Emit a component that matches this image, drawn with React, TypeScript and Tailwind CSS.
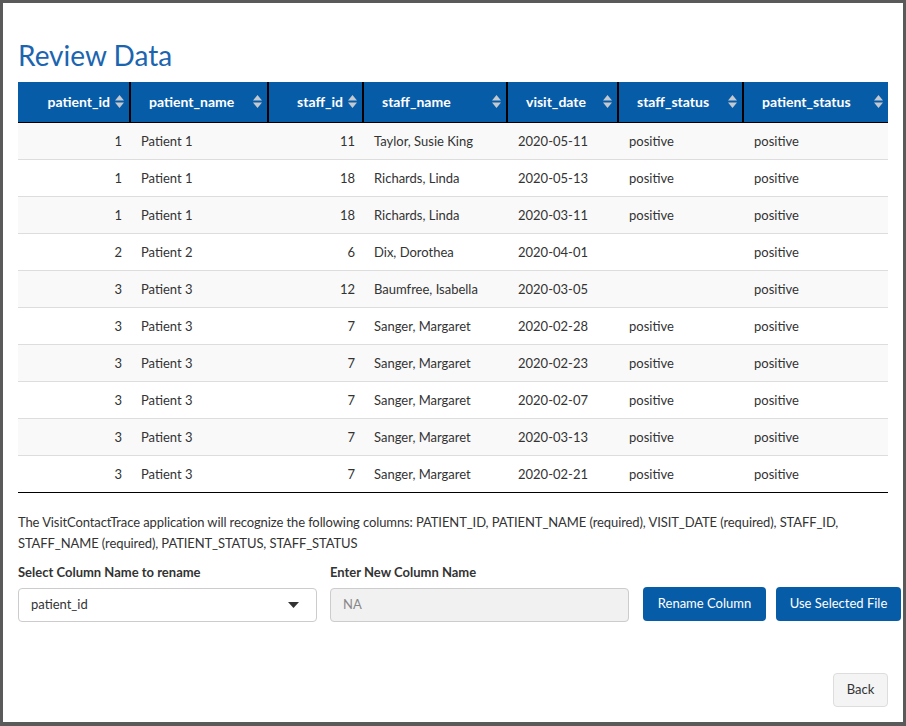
import React from 'react';

const columns = [
    { key: 'patient_id', width: 113, numeric: true },
    { key: 'patient_name', width: 138 },
    { key: 'staff_id', width: 95, numeric: true },
    { key: 'staff_name', width: 144 },
    { key: 'visit_date', width: 111 },
    { key: 'staff_status', width: 125 },
    { key: 'patient_status', width: 144 },
];

const rows = [
    ['1', 'Patient 1', '11', 'Taylor, Susie King', '2020-05-11', 'positive', 'positive'],
    ['1', 'Patient 1', '18', 'Richards, Linda', '2020-05-13', 'positive', 'positive'],
    ['1', 'Patient 1', '18', 'Richards, Linda', '2020-03-11', 'positive', 'positive'],
    ['2', 'Patient 2', '6', 'Dix, Dorothea', '2020-04-01', '', 'positive'],
    ['3', 'Patient 3', '12', 'Baumfree, Isabella', '2020-03-05', '', 'positive'],
    ['3', 'Patient 3', '7', 'Sanger, Margaret', '2020-02-28', 'positive', 'positive'],
    ['3', 'Patient 3', '7', 'Sanger, Margaret', '2020-02-23', 'positive', 'positive'],
    ['3', 'Patient 3', '7', 'Sanger, Margaret', '2020-02-07', 'positive', 'positive'],
    ['3', 'Patient 3', '7', 'Sanger, Margaret', '2020-03-13', 'positive', 'positive'],
    ['3', 'Patient 3', '7', 'Sanger, Margaret', '2020-02-21', 'positive', 'positive'],
];

const gridCols = 'grid grid-cols-[113px_138px_95px_144px_111px_125px_144px]';

const SortIcon = () => (
    <svg width="9" height="13" viewBox="0 0 9 13" className="shrink-0">
        <path d="M4.5 0 L9 5.5 L0 5.5 Z" fill="#c4c9d0" />
        <path d="M0 7.5 L9 7.5 L4.5 13 Z" fill="#c4c9d0" />
    </svg>
);

const App: React.FC = () => {
    return (
        <div
            className="w-[906px] h-[726px] bg-[#5a5a5a] pt-[3px] pl-[3px] overflow-hidden"
            style={{ fontFamily: 'Lato, "Open Sans", sans-serif' }}
        >
            <div className="w-[900px] h-[719px] bg-white px-[15px] flex flex-col text-[#333]">
                <h1 className="mt-[35px] text-[28px] leading-[34px] text-[#1b65b0] font-normal">Review Data</h1>

                {/* data table */}
                <div className="mt-[10px] w-[870px]">
                    <div className={`${gridCols} h-[41px] bg-[#075ca8] border-b border-black`}>
                        {columns.map((c, i) => (
                            <div
                                key={c.key}
                                className={`flex items-center pl-[18px] pr-[5px] pb-px text-white font-bold text-[14px] ${i < columns.length - 1 ? 'border-r-2 border-black' : ''} ${c.numeric ? 'justify-end gap-[5px]' : 'justify-between'}`}
                            >
                                <span>{c.key}</span>
                                <SortIcon />
                            </div>
                        ))}
                    </div>
                    {rows.map((r, ri) => (
                        <div
                            key={ri}
                            className={`${gridCols} h-[37px] text-[13px] ${ri % 2 === 0 ? 'bg-[#f9f9f9]' : 'bg-white'} ${ri === rows.length - 1 ? 'border-b border-black' : 'border-b border-[#dddddd]'}`}
                        >
                            {r.map((v, ci) => (
                                <div
                                    key={ci}
                                    className={`flex items-center pt-px px-[10px] ${columns[ci].numeric ? 'justify-end pr-[9px]' : ''}`}
                                >
                                    {v}
                                </div>
                            ))}
                        </div>
                    ))}
                </div>

                <p className="mt-[19px] text-[13px] leading-[21px] tracking-[-0.1px]">
                    The VisitContactTrace application will recognize the following columns: PATIENT_ID, PATIENT_NAME (required), VISIT_DATE (required), STAFF_ID,
                    <br />
                    STAFF_NAME (required), PATIENT_STATUS, STAFF_STATUS
                </p>

                {/* rename controls */}
                <div className="mt-[9px] flex items-end">
                    <div className="w-[299px] shrink-0 flex flex-col">
                        <label className="text-[13px] font-bold leading-[18px]">Select Column Name to rename</label>
                        <div className="mt-[7px] h-[34px] border border-[#cccccc] rounded-[4px] flex items-center justify-between pl-[12px] pr-[17px] text-[13px]">
                            <span>patient_id</span>
                            <svg width="11" height="6" viewBox="0 0 11 6">
                                <path d="M0 0 L11 0 L5.5 6 Z" fill="#333" />
                            </svg>
                        </div>
                    </div>
                    <div className="ml-[13px] w-[299px] shrink-0 flex flex-col">
                        <label className="text-[13px] font-bold leading-[18px]">Enter New Column Name</label>
                        <div className="mt-[7px] h-[34px] border border-[#cccccc] rounded-[4px] bg-[#f1f1f1] flex items-center pl-[12px] text-[13px] text-[#888]">
                            NA
                        </div>
                    </div>
                    <button className="ml-[14px] mb-[1px] h-[34px] w-[123px] shrink-0 bg-[#075ca8] text-white text-[13px] rounded-[4px]">
                        Rename Column
                    </button>
                    <button className="ml-[10px] mb-[1px] h-[34px] w-[125px] shrink-0 bg-[#075ca8] text-white text-[13px] rounded-[4px]">
                        Use Selected File
                    </button>
                </div>

                <div className="mt-auto mb-[15px] flex justify-end">
                    <button className="h-[34px] w-[55px] bg-[#f4f4f4] border border-[#dddddd] rounded-[4px] text-[13px] text-[#333]">
                        Back
                    </button>
                </div>
            </div>
        </div>
    );
};

export default App;
